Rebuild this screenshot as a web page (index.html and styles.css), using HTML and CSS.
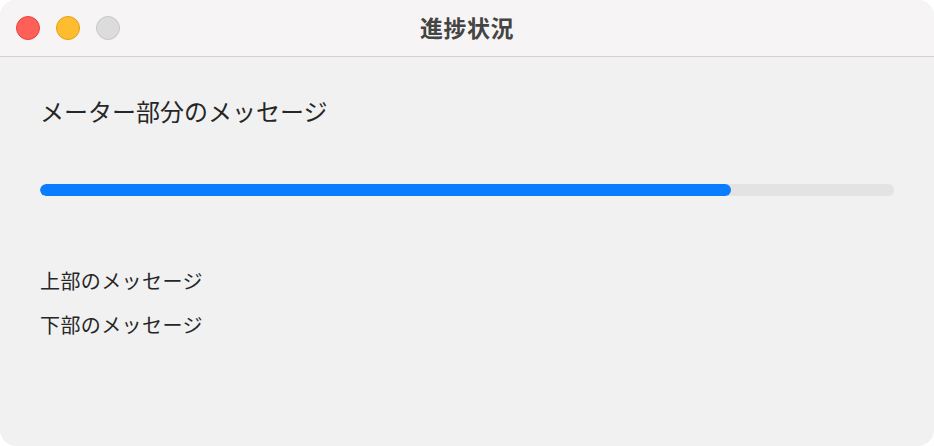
FILE: index.html
```html
<!DOCTYPE html>
<html lang="ja">
<head>
<meta charset="utf-8">
<title>進捗状況</title>
<link rel="stylesheet" href="styles.css">
</head>
<body>
<div class="window">
  <div class="titlebar">
    <div class="lights">
      <span class="light red"></span>
      <span class="light yellow"></span>
      <span class="light gray"></span>
    </div>
    <div class="title">進捗状況</div>
  </div>
  <div class="content">
    <div class="heading">メーター部分のメッセージ</div>
    <div class="track"><div class="fill" style="width: 80.9%"></div></div>
    <div class="msg msg-top">上部のメッセージ</div>
    <div class="msg msg-bottom">下部のメッセージ</div>
  </div>
</div>
</body>
</html>
```

FILE: styles.css
```css
html, body {
  margin: 0;
  padding: 0;
  background: #ffffff;
}
body {
  width: 934px;
  height: 446px;
  overflow: hidden;
  font-family: "Noto Sans CJK JP", "Noto Sans", sans-serif;
}
.window {
  width: 934px;
  height: 446px;
  border-radius: 16px;
  overflow: hidden;
  background: #f1f1f1;
  display: flex;
  flex-direction: column;
}
.titlebar {
  height: 56px;
  flex: 0 0 56px;
  background: #f6f4f5;
  border-bottom: 1px solid #d2d2d2;
  position: relative;
  display: flex;
  align-items: center;
  justify-content: center;
}
.lights {
  position: absolute;
  left: 16px;
  top: 16px;
  display: flex;
  gap: 16px;
}
.light {
  width: 22px;
  height: 22px;
  border-radius: 50%;
  display: block;
  border: 1px solid transparent;
}
.red { background: #fe5f57; border-color: #e2463f; }
.yellow { background: #febc2e; border-color: #e1a116; }
.gray { background: #dddcdd; border-color: #c8c7c8; }
.title {
  font-size: 23px;
  font-weight: 700;
  letter-spacing: 0.5px;
  color: #444444;
  line-height: 30px;
  margin-top: -2px;
}
.content {
  flex: 1;
  padding: 38px 40px 0 40px;
  color: #262626;
}
.heading {
  font-size: 24px;
  line-height: 32px;
  height: 32px;
}
.track {
  margin-top: 57px;
  height: 12px;
  border-radius: 6px;
  background: #e3e3e3;
  overflow: hidden;
}
.fill {
  height: 100%;
  background: #0a7cff;
  border-radius: 6px;
}
.msg {
  font-size: 20px;
  line-height: 28px;
  letter-spacing: 0.4px;
}
.msg-top { margin-top: 71px; }
.msg-bottom { margin-top: 16px; }
```
